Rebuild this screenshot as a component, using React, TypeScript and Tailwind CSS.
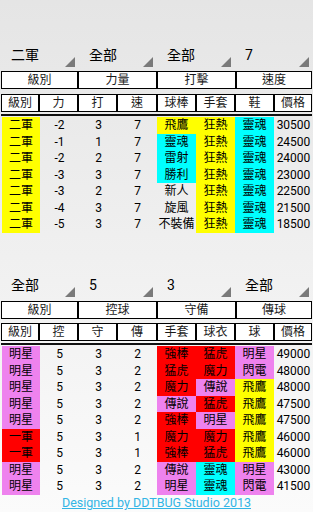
import React from "react";

type Cell = [string, string];
const Y = "bg-[#ffff00]";
const C = "bg-[#00ffff]";
const R = "bg-[#ff0000]";
const V = "bg-[#ee82ee]";
const N = "";

const table1: Cell[][] = [
  [["二軍", Y], ["-2", N], ["3", N], ["7", N], ["飛鷹", Y], ["狂熱", Y], ["靈魂", C], ["30500", N]],
  [["二軍", Y], ["-1", N], ["1", N], ["7", N], ["靈魂", C], ["狂熱", Y], ["靈魂", C], ["24500", N]],
  [["二軍", Y], ["-2", N], ["2", N], ["7", N], ["雷射", C], ["狂熱", Y], ["靈魂", C], ["24000", N]],
  [["二軍", Y], ["-3", N], ["3", N], ["7", N], ["勝利", C], ["狂熱", Y], ["靈魂", C], ["23000", N]],
  [["二軍", Y], ["-3", N], ["2", N], ["7", N], ["新人", N], ["狂熱", Y], ["靈魂", C], ["22500", N]],
  [["二軍", Y], ["-4", N], ["3", N], ["7", N], ["旋風", N], ["狂熱", Y], ["靈魂", C], ["21500", N]],
  [["二軍", Y], ["-5", N], ["3", N], ["7", N], ["不裝備", N], ["狂熱", Y], ["靈魂", C], ["18500", N]],
];

const table2: Cell[][] = [
  [["明星", V], ["5", N], ["3", N], ["2", N], ["強棒", R], ["猛虎", R], ["明星", V], ["49000", N]],
  [["明星", V], ["5", N], ["3", N], ["2", N], ["猛虎", R], ["魔力", R], ["閃電", V], ["48000", N]],
  [["明星", V], ["5", N], ["3", N], ["2", N], ["魔力", R], ["傳說", V], ["飛鷹", Y], ["48000", N]],
  [["明星", V], ["5", N], ["3", N], ["2", N], ["傳說", V], ["猛虎", R], ["飛鷹", Y], ["47500", N]],
  [["明星", V], ["5", N], ["3", N], ["2", N], ["強棒", R], ["明星", V], ["飛鷹", Y], ["47500", N]],
  [["一軍", R], ["5", N], ["3", N], ["1", N], ["魔力", R], ["魔力", R], ["飛鷹", Y], ["46000", N]],
  [["一軍", R], ["5", N], ["3", N], ["1", N], ["強棒", R], ["猛虎", R], ["飛鷹", Y], ["46000", N]],
  [["明星", V], ["5", N], ["3", N], ["2", N], ["傳說", V], ["靈魂", C], ["明星", V], ["43000", N]],
  [["明星", V], ["5", N], ["3", N], ["2", N], ["明星", V], ["靈魂", C], ["閃電", V], ["41500", N]],
];

function Spinner({ label }: { label: string }) {
  return (
    <div className="relative w-[78px] h-full flex items-end pb-[4px] pl-[11px] text-[14px] leading-[18px] text-black">
      <span>{label}</span>
      <svg className="absolute right-[3px] bottom-[1px]" width="10" height="10" viewBox="0 0 10 10">
        <polygon points="10,0 10,10 0,10" fill="#7a7a7a" />
      </svg>
    </div>
  );
}

function Box({ label }: { label: string }) {
  return (
    <div className="border border-black bg-white flex items-center justify-center text-[12px] leading-none text-[#1a1a1a]">
      {label}
    </div>
  );
}

function Section({
  spinners,
  groups,
  cols,
  rows,
  spinnerH,
  gap2,
}: {
  spinners: string[];
  groups: string[];
  cols: string[];
  rows: Cell[][];
  spinnerH: string;
  gap2: string;
}) {
  return (
    <div className="flex flex-col">
      <div className={`flex ${spinnerH}`}>
        {spinners.map((s, i) => (
          <Spinner key={i} label={s} />
        ))}
      </div>
      <div className="mt-[3px] ml-[1px] w-[311px] h-[18px] grid grid-cols-[77px_79px_79px_76px]">
        {groups.map((g, i) => (
          <Box key={i} label={g} />
        ))}
      </div>
      <div className={`${gap2} ml-[1px] w-[311px] h-[18px] grid grid-cols-[38px_39px_39px_40px_39px_39px_39px_38px]`}>
        {cols.map((c, i) => (
          <Box key={i} label={c} />
        ))}
      </div>
      <div className="mt-[2px] ml-[1px] w-[311px] h-[2px] bg-[#111]" />
      <div className="mt-[1px] ml-[2px] w-[311px] flex flex-col">
        {rows.map((r, ri) => (
          <div key={ri} className="h-[16.5px] grid grid-cols-[38px_39px_39px_39px_39px_39px_39px_39px]">
            {r.map(([t, bg], ci) => (
              <div
                key={ci}
                className={`${bg} flex items-center justify-center text-[12px] leading-none text-black whitespace-nowrap`}
              >
                {t}
              </div>
            ))}
          </div>
        ))}
      </div>
    </div>
  );
}

export default function App() {
  return (
    <div
      className="w-[313px] h-[512px] overflow-hidden bg-linear-to-b from-[#e5e5e5] to-[#fbfbfb]"
      style={{ fontFamily: 'Roboto, "Noto Sans CJK TC", sans-serif' }}
    >
      <Section
        spinners={["二軍", "全部", "全部", "7"]}
        groups={["級別", "力量", "打擊", "速度"]}
        cols={["級別", "力", "打", "速", "球棒", "手套", "鞋", "價格"]}
        rows={table1}
        spinnerH="h-[68px]"
        gap2="mt-[5px]"
      />
      <Section
        spinners={["全部", "5", "3", "全部"]}
        groups={["級別", "控球", "守備", "傳球"]}
        cols={["級別", "控", "守", "傳", "手套", "球衣", "球", "價格"]}
        rows={table2}
        spinnerH="h-[65.5px]"
        gap2="mt-[4px]"
      />
      <div className="h-[17px] flex items-center justify-center">
        <span className="text-[12.5px] leading-[16px] text-[#33b5e5] underline underline-offset-[1px]">
          Designed by DDTBUG Studio 2013
        </span>
      </div>
    </div>
  );
}
